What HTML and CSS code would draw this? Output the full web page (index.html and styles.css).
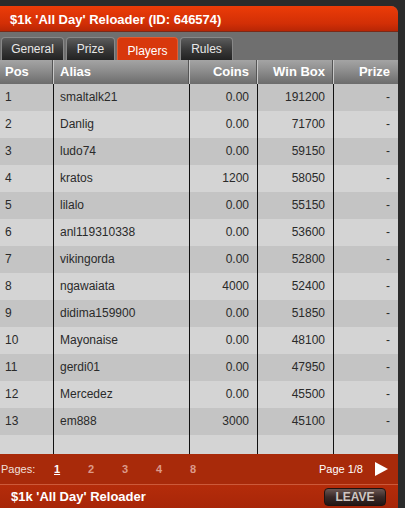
FILE: index.html
```html
<!DOCTYPE html>
<html>
<head>
<meta charset="utf-8">
<link rel="stylesheet" href="styles.css">
</head>
<body>
<div class="panel">
  <div class="title">$1k 'All Day' Reloader (ID: 646574)</div>
  <div class="tabs">
    <div class="tab t-general">General</div>
    <div class="tab t-prize">Prize</div>
    <div class="tab t-players active">Players</div>
    <div class="tab t-rules">Rules</div>
  </div>
  <div class="grid head">
    <div class="c pos">Pos</div>
    <div class="c alias">Alias</div>
    <div class="c num">Coins</div>
    <div class="c num">Win Box</div>
    <div class="c num last">Prize</div>
  </div>
  <div class="body">
    <div class="grid row"><div class="c pos">1</div><div class="c alias">smaltalk21</div><div class="c num">0.00</div><div class="c num">191200</div><div class="c num last">-</div></div>
    <div class="grid row"><div class="c pos">2</div><div class="c alias">Danlig</div><div class="c num">0.00</div><div class="c num">71700</div><div class="c num last">-</div></div>
    <div class="grid row"><div class="c pos">3</div><div class="c alias">ludo74</div><div class="c num">0.00</div><div class="c num">59150</div><div class="c num last">-</div></div>
    <div class="grid row"><div class="c pos">4</div><div class="c alias">kratos</div><div class="c num">1200</div><div class="c num">58050</div><div class="c num last">-</div></div>
    <div class="grid row"><div class="c pos">5</div><div class="c alias">lilalo</div><div class="c num">0.00</div><div class="c num">55150</div><div class="c num last">-</div></div>
    <div class="grid row"><div class="c pos">6</div><div class="c alias">anl119310338</div><div class="c num">0.00</div><div class="c num">53600</div><div class="c num last">-</div></div>
    <div class="grid row"><div class="c pos">7</div><div class="c alias">vikingorda</div><div class="c num">0.00</div><div class="c num">52800</div><div class="c num last">-</div></div>
    <div class="grid row"><div class="c pos">8</div><div class="c alias">ngawaiata</div><div class="c num">4000</div><div class="c num">52400</div><div class="c num last">-</div></div>
    <div class="grid row"><div class="c pos">9</div><div class="c alias">didima159900</div><div class="c num">0.00</div><div class="c num">51850</div><div class="c num last">-</div></div>
    <div class="grid row"><div class="c pos">10</div><div class="c alias">Mayonaise</div><div class="c num">0.00</div><div class="c num">48100</div><div class="c num last">-</div></div>
    <div class="grid row"><div class="c pos">11</div><div class="c alias">gerdi01</div><div class="c num">0.00</div><div class="c num">47950</div><div class="c num last">-</div></div>
    <div class="grid row"><div class="c pos">12</div><div class="c alias">Mercedez</div><div class="c num">0.00</div><div class="c num">45500</div><div class="c num last">-</div></div>
    <div class="grid row"><div class="c pos">13</div><div class="c alias">em888</div><div class="c num">3000</div><div class="c num">45100</div><div class="c num last">-</div></div>
    <div class="grid row filler"><div class="c"></div><div class="c"></div><div class="c"></div><div class="c"></div><div class="c last"></div></div>
  </div>
  <div class="pager">
    <span class="plabel">Pages:</span>
    <span class="pnum cur">1</span>
    <span class="pnum">2</span>
    <span class="pnum">3</span>
    <span class="pnum">4</span>
    <span class="pnum">8</span>
    <span class="pinfo">Page 1/8</span>
    <svg class="next" width="13" height="14" viewBox="0 0 13 14"><polygon points="0,0 13,7 0,14" fill="#ffffff"/></svg>
  </div>
  <div class="footer">
    <span class="ftitle">$1k 'All Day' Reloader</span>
    <span class="leave">LEAVE</span>
  </div>
</div>
</body>
</html>
```
FILE: styles.css
```css
html, body {
  margin: 0;
  padding: 0;
  background: #2b2b2b;
  font-family: "Liberation Sans", Arial, sans-serif;
}
.panel {
  width: 398px;
  margin-top: 6px;
  background: #6f6f6f;
  border-top-right-radius: 7px;
  overflow: hidden;
}
.title {
  height: 26px;
  box-sizing: border-box;
  padding: 6px 0 0 10px;
  background: linear-gradient(#ec3c08, #d22f06 70%, #b82605);
  color: #fff;
  font-weight: bold;
  font-size: 13px;
  border-bottom: 1px solid #7a2a18;
}
.tabs {
  height: 28px;
  box-sizing: border-box;
  padding: 5px 0 0 1px;
  display: flex;
  gap: 2px;
  background: #6f6f6f;
}
.tab {
  height: 23px;
  box-sizing: border-box;
  padding-top: 4px;
  text-align: center;
  font-size: 12px;
  color: #e8e8e8;
  background: linear-gradient(#5c5c5c, #3a3a3a 50%, #222 100%);
  border-top-left-radius: 4px;
  border-top-right-radius: 4px;
  border: 1px solid #888;
  border-bottom: none;
}
.t-general { width: 63px; }
.t-prize { width: 49px; }
.t-players { width: 61px; }
.t-rules { width: 53px; }
.tab.active {
  background: #d8380c;
  border-color: #e25a30;
  color: #fff;
  padding-top: 6px;
}
.grid {
  display: grid;
  grid-template-columns: 54px 136px 68px 76px 64px;
}
.head {
  height: 24px;
  background: linear-gradient(#a4a4a4, #8a8a8a 50%, #6c6c6c);
}
.head .c {
  color: #fff;
  font-weight: bold;
  font-size: 13px;
  line-height: 24px;
  border-right: 1px solid #c8c8c8;
  box-shadow: inset -2px 0 0 -1px #555;
}
.head .c.last { border-right: none; box-shadow: none; }
.c {
  box-sizing: border-box;
  white-space: nowrap;
}
.pos { padding-left: 5px; }
.alias { padding-left: 6px; }
.num { text-align: right; padding-right: 8px; }
.row {
  height: 27px;
  background: #c4c4c4;
}
.row:nth-child(even) { background: #d4d4d4; }
.row .c {
  font-size: 12px;
  line-height: 27px;
  color: #2a2a2a;
  border-right: 1px solid #111;
}
.row .c.last { border-right: none; }
.row.filler {
  height: 19px;
  background: #d4d4d4;
}
.pager {
  height: 30px;
  background: #a82a0a;
  display: flex;
  align-items: center;
  font-size: 11px;
  color: #f0e0dc;
  border-bottom: 1px solid #cc5a3a;
}
.plabel { margin-left: 1px; width: 53px; }
.pnum {
  width: 34px;
  color: #dc9a8a;
  font-weight: bold;
  font-size: 11px;
}
.pnum.cur {
  color: #fff;
  text-decoration: underline;
}
.pinfo {
  margin-left: auto;
  margin-right: 12px;
  color: #fff;
  font-size: 11px;
}
.next { margin-right: 10px; }
.footer {
  height: 23px;
  background: linear-gradient(#b42c0a, #a82608);
  display: flex;
  align-items: center;
  justify-content: space-between;
}
.ftitle {
  margin-left: 11px;
  color: #fff;
  font-weight: bold;
  font-size: 13px;
}
.leave {
  width: 62px;
  height: 18px;
  box-sizing: border-box;
  margin-right: 12px;
  border-radius: 4px;
  border: 1px solid #1e1412;
  background: linear-gradient(#6a5652, #3a2a28 50%, #221614);
  color: #cfc6c2;
  font-weight: bold;
  font-size: 12px;
  text-align: center;
  line-height: 16px;
}
```
